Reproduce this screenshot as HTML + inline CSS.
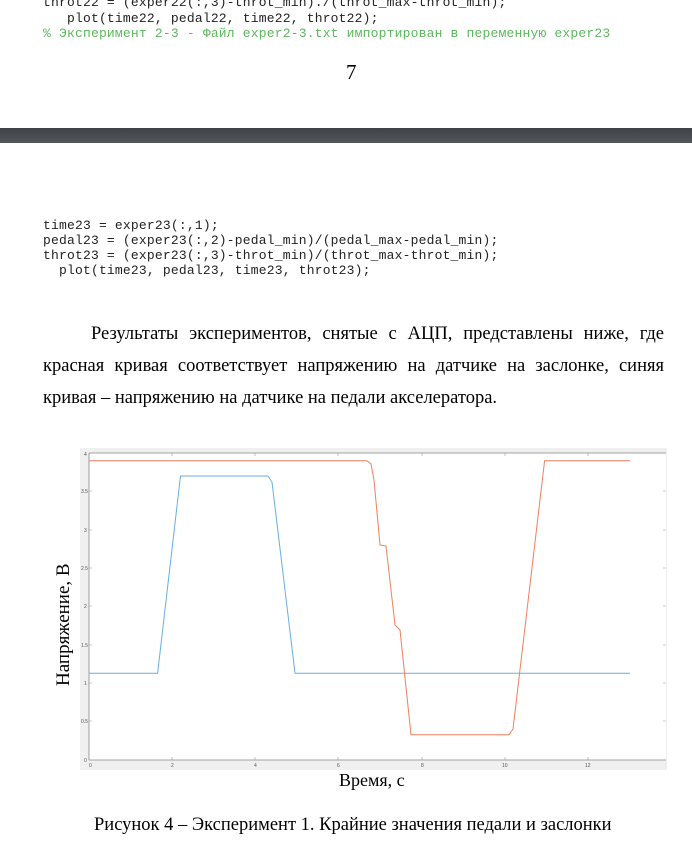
<!DOCTYPE html>
<html><head><meta charset="utf-8"><style>
body{margin:0;width:692px;height:847px;background:#fff;position:relative;overflow:hidden}
.c{position:absolute;font-family:"Liberation Mono",monospace;font-size:13px;letter-spacing:0.19px;color:#222;white-space:pre;line-height:15px}
.t{position:absolute;font-family:"Liberation Serif",serif;font-size:18.5px;color:#000;white-space:nowrap}
</style></head><body>
<div class="c" style="left:43px;top:-5px">throt22 = (exper22(:,3)-throt_min)./(throt_max-throt_min);</div>
<div class="c" style="left:43px;top:11px">   plot(time22, pedal22, time22, throt22);</div>
<div class="c" style="left:43px;top:26px;color:#5cb85c">% Эксперимент 2-3 - Файл exper2-3.txt импортирован в переменную exper23</div>
<div class="t" style="left:346px;top:60px;font-size:21px">7</div>
<div style="position:absolute;left:0;top:128px;width:692px;height:15px;background:linear-gradient(#3f4347,#52565a)"></div>
<div class="c" style="left:43px;top:218px">time23 = exper23(:,1);</div>
<div class="c" style="left:43px;top:233px">pedal23 = (exper23(:,2)-pedal_min)/(pedal_max-pedal_min);</div>
<div class="c" style="left:43px;top:248px">throt23 = (exper23(:,3)-throt_min)/(throt_max-throt_min);</div>
<div class="c" style="left:43px;top:263px">  plot(time23, pedal23, time23, throt23);</div>
<div style="position:absolute;left:43px;top:318px;width:621px;font-family:'Liberation Serif',serif;font-size:18.5px;line-height:32px;text-align:justify;text-indent:48px">Результаты экспериментов, снятые с АЦП, представлены ниже, где красная кривая соответствует напряжению на датчике на заслонке, синяя кривая – напряжению на датчике на педали акселератора.</div>
<svg style="position:absolute;left:0;top:0" width="692" height="847">
<rect x="80" y="448" width="587" height="322" fill="#f0f0f0"/>
<rect x="89" y="453" width="577" height="307" fill="#fff"/>
<path d="M89 453H666M89 453V760H666" fill="none" stroke="#888" stroke-width="0.8"/>
<g stroke="#999" stroke-width="0.6">
<path d="M172 453v3M255 453v3M338 453v3M422 453v3M505 453v3M588 453v3M172 760v-3M255 760v-3M338 760v-3M422 760v-3M505 760v-3M588 760v-3"/>
<path d="M89 721h3M89 683h3M89 645h3M89 606h3M89 568h3M89 530h3M89 491h3M666 721h-3M666 683h-3M666 645h-3M666 606h-3M666 568h-3M666 530h-3M666 491h-3"/>
</g>
<g font-family="Liberation Sans" font-size="5" fill="#555">
<text x="89" y="767">0</text><text x="171" y="767">2</text><text x="254" y="767">4</text><text x="337" y="767">6</text><text x="421" y="767">8</text><text x="502" y="767">10</text><text x="585" y="767">12</text>
<text x="84" y="762">0</text><text x="81" y="723">0.5</text><text x="84" y="685">1</text><text x="81" y="647">1.5</text><text x="84" y="608">2</text><text x="81" y="570">2.5</text><text x="84" y="532">3</text><text x="81" y="493">3.5</text><text x="84" y="456">4</text>
</g>
<polyline fill="none" stroke="#6aaee0" stroke-width="1" points="89,673.3 157.6,673.3 180.5,476 267.9,476 272,482 295,673.3 630,673.3"/>
<polyline fill="none" stroke="#ee7f5e" stroke-width="1" points="89,460.7 367,460.7 371,464 374,480 380,545 386,546 395,625 400,630 411,734.7 509,734.7 513,729 544.6,460.7 630,460.7"/>
<text x="69" y="686" transform="rotate(-90 69 686)" font-family="Liberation Serif" font-size="19">Напряжение, В</text>
<text x="339" y="786" font-family="Liberation Serif" font-size="18">Время, с</text>
</svg>
<div class="t" style="left:94px;top:815px">Рисунок 4 – Эксперимент 1. Крайние значения педали и заслонки</div>
</body></html>
